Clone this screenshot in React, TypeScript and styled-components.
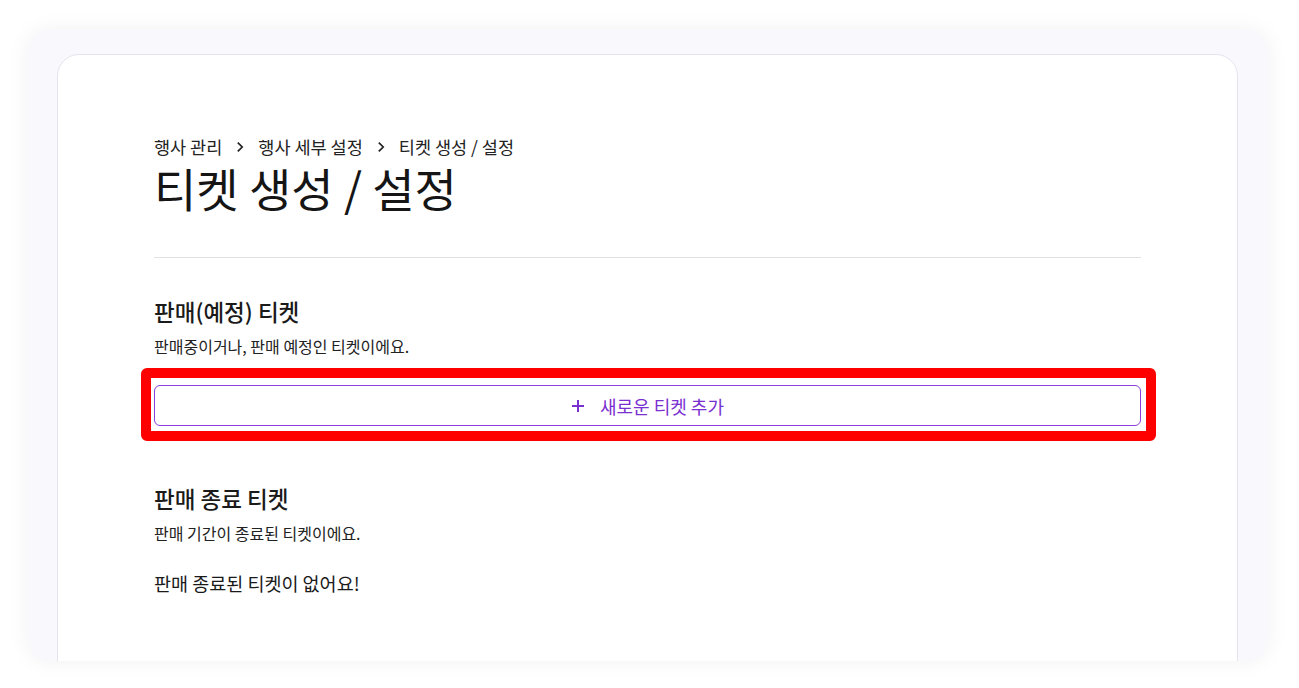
import React from "react";
import styled, { createGlobalStyle } from "styled-components";

const Global = createGlobalStyle`
  html, body { margin: 0; padding: 0; background: #ffffff; }
  body { font-family: "Noto Sans CJK KR", "Noto Sans", sans-serif; color: #1a1a1a; }
  * { box-sizing: border-box; }
`;

const Page = styled.div`
  width: 1299px;
  height: 688px;
  padding: 30px 31px 27px 28px;
`;

const Frame = styled.div`
  width: 1240px;
  height: 631px;
  background: #f9f8fd;
  border-radius: 20px;
  box-shadow: 0 0 22px rgba(0, 0, 0, 0.06);
  overflow: hidden;
  padding: 24px 30px 0 29px;
`;

const Card = styled.main`
  height: 640px;
  background: #ffffff;
  border: 1px solid #e5e3ee;
  border-radius: 22px 22px 0 0;
  padding: 80px 96px 0 96px;
`;

const Breadcrumb = styled.nav`
  display: flex;
  align-items: center;
  gap: 12px;
  font-size: 17.5px;
  line-height: 24px;
  color: #222;
`;

const Crumb = styled.span``;

const Chevron = styled.svg`
  width: 12px;
  height: 12px;
`;

const Title = styled.h1`
  margin: 0;
  font-size: 46px;
  font-weight: 400;
  line-height: 56px;
  color: #151515;
`;

const Divider = styled.hr`
  margin: 42px 0 0;
  border: 0;
  border-top: 1px solid #e2e2e2;
`;

const Section = styled.section<{ $top: number }>`
  margin-top: ${(p) => p.$top}px;
  display: flex;
  flex-direction: column;
`;

const SectionTitle = styled.h2`
  margin: 0;
  font-size: 22.5px;
  font-weight: 500;
  line-height: 30px;
  color: #1a1a1a;
`;

const SectionDesc = styled.p`
  margin: 9px 0 0;
  font-size: 16px;
  line-height: 22px;
  color: #222;
`;

const Highlight = styled.div`
  position: relative;
  margin-top: 28px;
`;

const AddButton = styled.button`
  width: 100%;
  height: 41px;
  display: flex;
  align-items: center;
  justify-content: center;
  gap: 15px;
  background: #fff;
  border: 1.5px solid #8b3fdc;
  border-radius: 6px;
  color: #7a2fd0;
  font-family: inherit;
  font-size: 18px;
  cursor: pointer;
  &::after {
    content: "";
    position: absolute;
    left: -13px;
    right: -15px;
    top: -17px;
    bottom: -15px;
    border: 10px solid #ff0000;
    border-radius: 6px;
    pointer-events: none;
  }
`;

const Plus = styled.svg`
  width: 14px;
  height: 14px;
`;

const Empty = styled.p`
  margin: 26px 0 0;
  font-size: 18.5px;
  line-height: 26px;
  color: #1a1a1a;
`;

const ChevronIcon = () => (
  <Chevron viewBox="0 0 12 12" fill="none" stroke="#222" strokeWidth="1.7">
    <path d="M3.8 1.6 L8.2 6 L3.8 10.4" />
  </Chevron>
);

export default function App() {
  return (
    <>
      <Global />
      <Page>
        <Frame>
          <Card>
            <Breadcrumb>
              <Crumb>행사 관리</Crumb>
              <ChevronIcon />
              <Crumb>행사 세부 설정</Crumb>
              <ChevronIcon />
              <Crumb>티켓 생성 / 설정</Crumb>
            </Breadcrumb>
            <Title>티켓 생성 / 설정</Title>
            <Divider />
            <Section $top={38}>
              <SectionTitle>판매(예정) 티켓</SectionTitle>
              <SectionDesc>판매중이거나, 판매 예정인 티켓이에요.</SectionDesc>
              <Highlight>
                <AddButton>
                  <Plus viewBox="0 0 14 14" stroke="#7a2fd0" strokeWidth="2">
                    <path d="M7 1 V13 M1 7 H13" />
                  </Plus>
                  새로운 티켓 추가
                </AddButton>
              </Highlight>
            </Section>
            <Section $top={57}>
              <SectionTitle>판매 종료 티켓</SectionTitle>
              <SectionDesc>판매 기간이 종료된 티켓이에요.</SectionDesc>
              <Empty>판매 종료된 티켓이 없어요!</Empty>
            </Section>
          </Card>
        </Frame>
      </Page>
    </>
  );
}
